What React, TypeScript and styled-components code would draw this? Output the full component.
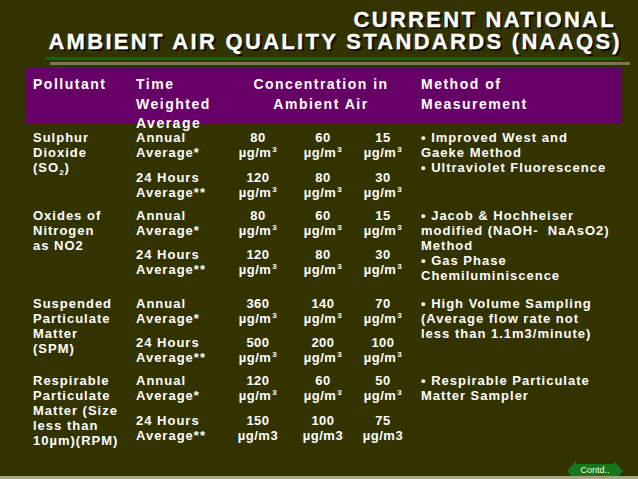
import React from "react";
import styled, { createGlobalStyle } from "styled-components";

const Global = createGlobalStyle`
  html, body { margin: 0; padding: 0; background: #333300; }
  body { font-family: "Liberation Sans", Arial, sans-serif; }
`;

const Slide = styled.div`
  width: 638px;
  height: 479px;
  background: #333300;
  overflow: hidden;
  display: flex;
  flex-direction: column;
  color: #ffffff;
  font-weight: bold;
`;

const Title = styled.h1`
  margin: 0;
  padding: 9px 16px 0 0;
  text-align: right;
  font-size: 22px;
  line-height: 22px;
  letter-spacing: 2.3px;
  font-weight: bold;
  text-shadow: 2px 2px 0 #0b0b00;
  -webkit-text-stroke: 0.3px #ffffff;
`;

const TitleLine = styled.div<{ $trail?: number }>`
  padding-right: ${(p) => p.$trail ?? 0}px;
  white-space: nowrap;
`;

const Rule = styled.div<{ $color: string; $left: number; $right: number; $top: number }>`
  height: 3px;
  margin: ${(p) => p.$top}px ${(p) => p.$right}px 0 ${(p) => p.$left}px;
  background: ${(p) => p.$color};
`;

const HeaderBand = styled.div`
  margin: 3px 16px 0 26px;
  height: 56px;
  box-sizing: border-box;
  padding: 7px 0 0 7px;
  background: #660066;
  display: grid;
  grid-template-columns: 103px 94px 176px 1fr;
  font-size: 14px;
  line-height: 19.5px;
  letter-spacing: 1.5px;
  align-items: start;
`;

const HeadCell = styled.div<{ $center?: boolean; $pad?: number }>`
  text-align: ${(p) => (p.$center ? "center" : "left")};
  padding-left: ${(p) => p.$pad ?? 0}px;
  white-space: nowrap;
`;

const Body = styled.div`
  margin: 6px 0 0 33px;
  display: flex;
  flex-direction: column;
  font-size: 13px;
  line-height: 15px;
  letter-spacing: 1px;
`;

const Group = styled.div<{ $after: number }>`
  display: grid;
  grid-template-columns: 103px 270px 1fr;
  padding-bottom: ${(p) => p.$after}px;
  align-items: start;
`;

const Lines = styled.div`
  display: flex;
  flex-direction: column;
  white-space: pre;
`;

const SubRows = styled.div`
  display: flex;
  flex-direction: column;
  gap: 9.5px;
`;

const SubRow = styled.div`
  display: grid;
  grid-template-columns: 94px 56px 74px 46px;
`;

const Value = styled.div`
  display: flex;
  flex-direction: column;
  align-items: center;
  white-space: nowrap;
  letter-spacing: 0.5px;
`;

const Method = styled.div`
  padding-left: 15px;
  display: flex;
  flex-direction: column;
  white-space: pre;
`;

const Sup = styled.sup`
  font-size: 8px;
  vertical-align: 5px;
  line-height: 0;
  margin-left: 1px;
`;

const Sub = styled.sub`
  font-size: 8px;
  vertical-align: -3px;
  line-height: 0;
`;

const Spacer = styled.div`
  flex: 1;
`;

const ContdRow = styled.div`
  height: 15px;
  display: flex;
  justify-content: flex-end;
  padding-right: 15px;
`;

const ContdButton = styled.div`
  width: 56px;
  height: 15px;
  position: relative;
`;

const ContdLabel = styled.span`
  position: absolute;
  top: 4px;
  left: 0;
  right: 0;
  text-align: center;
  font-size: 9px;
  line-height: 10px;
  font-weight: normal;
  color: #eaffea;
`;

const Strip = styled.div`
  position: relative;
  height: 3px;
  background: #a4a486;
`;

type Row = { time: string[]; vals: string[]; sup: boolean };
type GroupData = { name: React.ReactNode[]; rows: Row[]; method: string[]; after: number };

const unit = (sup: boolean) =>
  sup ? (
    <span>
      µg/m<Sup>3</Sup>
    </span>
  ) : (
    <span>µg/m3</span>
  );

const groups: GroupData[] = [
  {
    name: ["Sulphur", "Dioxide", <span key="s">(SO<Sub>2</Sub>)</span>],
    rows: [
      { time: ["Annual", "Average*"], vals: ["80", "60", "15"], sup: true },
      { time: ["24 Hours", "Average**"], vals: ["120", "80", "30"], sup: true },
    ],
    method: ["• Improved West and", "Gaeke Method", "• Ultraviolet Fluorescence"],
    after: 8,
  },
  {
    name: ["Oxides of", "Nitrogen", "as NO2"],
    rows: [
      { time: ["Annual", "Average*"], vals: ["80", "60", "15"], sup: true },
      { time: ["24 Hours", "Average**"], vals: ["120", "80", "30"], sup: true },
    ],
    method: ["• Jacob & Hochheiser", "modified (NaOH-  NaAsO2)", "Method", "• Gas Phase", "Chemiluminiscence"],
    after: 13,
  },
  {
    name: ["Suspended", "Particulate", "Matter", "(SPM)"],
    rows: [
      { time: ["Annual", "Average*"], vals: ["360", "140", "70"], sup: true },
      { time: ["24 Hours", "Average**"], vals: ["500", "200", "100"], sup: true },
    ],
    method: ["• High Volume Sampling", "(Average flow rate not", "less than 1.1m3/minute)"],
    after: 8,
  },
  {
    name: ["Respirable", "Particulate", "Matter (Size", "less than", "10µm)(RPM)"],
    rows: [
      { time: ["Annual", "Average*"], vals: ["120", "60", "50"], sup: true },
      { time: ["24 Hours", "Average**"], vals: ["150", "100", "75"], sup: false },
    ],
    method: ["• Respirable Particulate", "Matter Sampler"],
    after: 0,
  },
];

const ArrowShape = () => (
  <svg width="56" height="15" viewBox="0 0 56 15" style={{ position: "absolute", left: 0, top: 0 }}>
    <polygon points="0,10 9,0 9,3 47,3 47,0 56,10 47,20 47,17 9,17 9,20" fill="#15761a" />
  </svg>
);

export default function App() {
  return (
    <>
      <Global />
      <Slide>
        <Title>
          <TitleLine $trail={6}>CURRENT NATIONAL</TitleLine>
          <TitleLine>AMBIENT AIR QUALITY STANDARDS (NAAQS)</TitleLine>
        </Title>
        <Rule $color="#0a6a0a" $left={45} $right={16} $top={4} />
        <Rule $color="#77775a" $left={50} $right={8} $top={2} />
        <HeaderBand>
          <HeadCell>Pollutant</HeadCell>
          <HeadCell>
            Time
            <br />
            Weighted
            <br />
            Average
          </HeadCell>
          <HeadCell $center $pad={6}>
            Concentration in
            <br />
            Ambient Air
          </HeadCell>
          <HeadCell $pad={15}>
            Method of
            <br />
            Measurement
          </HeadCell>
        </HeaderBand>
        <Body>
          {groups.map((g, gi) => (
            <Group key={gi} $after={g.after}>
              <Lines>
                {g.name.map((n, i) => (
                  <span key={i}>{n}</span>
                ))}
              </Lines>
              <SubRows>
                {g.rows.map((r, ri) => (
                  <SubRow key={ri}>
                    <Lines>
                      {r.time.map((t) => (
                        <span key={t}>{t}</span>
                      ))}
                    </Lines>
                    {r.vals.map((v, vi) => (
                      <Value key={vi}>
                        <span>{v}</span>
                        {unit(r.sup)}
                      </Value>
                    ))}
                  </SubRow>
                ))}
              </SubRows>
              <Method>
                {g.method.map((m, mi) => (
                  <span key={mi}>{m}</span>
                ))}
              </Method>
            </Group>
          ))}
        </Body>
        <Spacer />
        <ContdRow>
          <ContdButton>
            <ArrowShape />
            <ContdLabel>Contd..</ContdLabel>
          </ContdButton>
        </ContdRow>
        <Strip />
      </Slide>
    </>
  );
}
